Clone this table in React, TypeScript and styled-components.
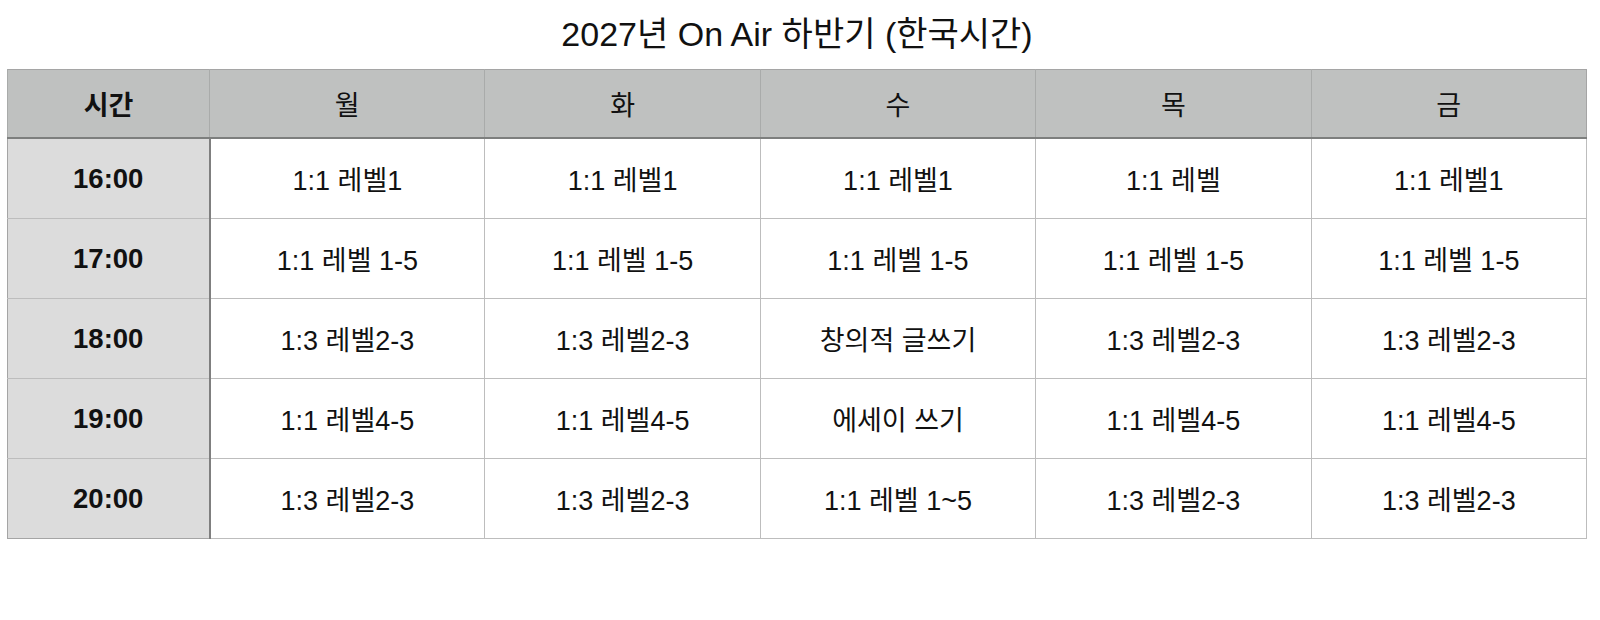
import React from 'react';
import styled, { createGlobalStyle } from 'styled-components';

const GlobalStyle = createGlobalStyle`
  html, body {
    margin: 0;
    padding: 0;
    background: #ffffff;
  }
  body {
    font-family: "Liberation Sans", Arial, "Noto Sans CJK KR", sans-serif;
    color: #111111;
  }
`;

const days = ['월', '화', '수', '목', '금'];

const schedule: { time: string; classes: string[] }[] = [
  { time: '16:00', classes: ['1:1 레벨1', '1:1 레벨1', '1:1 레벨1', '1:1 레벨', '1:1 레벨1'] },
  { time: '17:00', classes: ['1:1 레벨 1-5', '1:1 레벨 1-5', '1:1 레벨 1-5', '1:1 레벨 1-5', '1:1 레벨 1-5'] },
  { time: '18:00', classes: ['1:3 레벨2-3', '1:3 레벨2-3', '창의적 글쓰기', '1:3 레벨2-3', '1:3 레벨2-3'] },
  { time: '19:00', classes: ['1:1 레벨4-5', '1:1 레벨4-5', '에세이 쓰기', '1:1 레벨4-5', '1:1 레벨4-5'] },
  { time: '20:00', classes: ['1:3 레벨2-3', '1:3 레벨2-3', '1:1 레벨 1~5', '1:3 레벨2-3', '1:3 레벨2-3'] },
];

const App = () => {
  return (
    <>
      <GlobalStyle />
      <Page>
        <Title>2027년 On Air 하반기 (한국시간)</Title>
        <Table>
          <colgroup>
            <col style={{ width: 202 }} />
            {days.map((d) => (
              <col key={d} />
            ))}
          </colgroup>
          <thead>
            <tr>
              <HeadCell $first>시간</HeadCell>
              {days.map((d) => (
                <HeadCell key={d}>{d}</HeadCell>
              ))}
            </tr>
          </thead>
          <tbody>
            {schedule.map((row) => (
              <tr key={row.time}>
                <TimeCell>{row.time}</TimeCell>
                {row.classes.map((c, i) => (
                  <Cell key={i}>{c}</Cell>
                ))}
              </tr>
            ))}
          </tbody>
        </Table>
      </Page>
    </>
  );
};

export default App;

const Page = styled.div`
  width: 1600px;
  display: flex;
  flex-direction: column;
  padding-left: 7px;
  box-sizing: border-box;
`;

const Title = styled.h1`
  width: 1580px;
  height: 69px;
  margin: 0;
  padding-top: 13px;
  box-sizing: border-box;
  font-size: 34px;
  font-weight: 400;
  line-height: 42px;
  color: #111111;
  text-align: center;
`;

const Table = styled.table`
  width: 1580px;
  border-collapse: collapse;
  table-layout: fixed;
  border: 1px solid #a5a5a5;
`;

const HeadCell = styled.th<{ $first?: boolean }>`
  height: 67px;
  padding: 0;
  background: #bfc1c0;
  border-left: 1px solid #a9abaa;
  border-bottom: 2px solid #7d7f7e;
  font-size: 27px;
  font-weight: ${(p) => (p.$first ? 700 : 400)};
  color: #111111;
  text-align: center;
  vertical-align: middle;
`;

const TimeCell = styled.td`
  height: 79px;
  padding: 0;
  background: #dcdcdc;
  border-top: 1px solid #bdbdbd;
  border-right: 2px solid #7f7f7f;
  font-size: 27.5px;
  font-weight: 700;
  color: #111111;
  text-align: center;
  vertical-align: middle;
`;

const Cell = styled.td`
  height: 79px;
  padding: 0;
  background: #ffffff;
  border: 1px solid #bdbdbd;
  font-size: 27px;
  color: #111111;
  text-align: center;
  vertical-align: middle;
`;
